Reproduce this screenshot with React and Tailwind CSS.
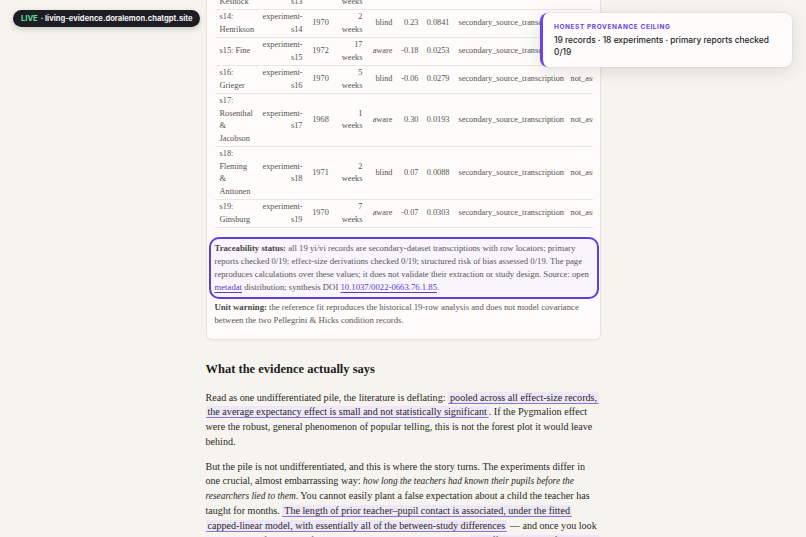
const rows = [
  { name: ["s13:", "Keshock"], id: "s13", year: "1971", weeks: "2", arm: "aware", es: "-0.02", v: "0.0144" },
  { name: ["s14:", "Henrikson"], id: "s14", year: "1970", weeks: "2", arm: "blind", es: "0.23", v: "0.0841" },
  { name: ["s15: Fine"], id: "s15", year: "1972", weeks: "17", arm: "aware", es: "-0.18", v: "0.0253" },
  { name: ["s16:", "Grieger"], id: "s16", year: "1970", weeks: "5", arm: "blind", es: "-0.06", v: "0.0279" },
  { name: ["s17:", "Rosenthal", "&", "Jacobson"], id: "s17", year: "1968", weeks: "1", arm: "aware", es: "0.30", v: "0.0193" },
  { name: ["s18:", "Fleming", "&", "Anttonen"], id: "s18", year: "1971", weeks: "2", arm: "blind", es: "0.07", v: "0.0088" },
  { name: ["s19:", "Ginsburg"], id: "s19", year: "1970", weeks: "7", arm: "aware", es: "-0.07", v: "0.0303" },
];

function Lines({ items }) {
  return items.map((t, i) => (
    <span key={i} className="block whitespace-nowrap">
      {t}
    </span>
  ));
}

function Mark({ children }) {
  return (
    <span className="box-decoration-clone rounded-[1px] border-b-[1.5px] border-[#8f75d2] bg-[#ede7f8] px-[2px]">
      {children}
    </span>
  );
}

function StudyTable() {
  const td = "py-[1px] align-middle";
  return (
    <div className="overflow-hidden">
      <table className="w-[406px] table-fixed border-collapse font-['Liberation_Serif',serif] text-[8.3px] leading-[12.5px] text-[#575350]">
        <colgroup>
          <col className="w-[48px]" />
          <col className="w-[45px]" />
          <col className="w-[26px]" />
          <col className="w-[34px]" />
          <col className="w-[30px]" />
          <col className="w-[26px]" />
          <col className="w-[31px]" />
          <col className="w-[113px]" />
          <col className="w-[53px]" />
        </colgroup>
        <tbody>
          {rows.map((r) => (
            <tr key={r.id} className="border-b border-[#ebe7e0]">
              <td className={`${td} pl-[5px] text-left`}>
                <Lines items={r.name} />
              </td>
              <td className={`${td} pr-[5px] text-right`}>
                <Lines items={["experiment-", r.id]} />
              </td>
              <td className={`${td} text-center`}>{r.year}</td>
              <td className={`${td} pr-[5px] text-right`}>
                <Lines items={[r.weeks, "weeks"]} />
              </td>
              <td className={`${td} pr-[5px] text-right`}>{r.arm}</td>
              <td className={`${td} pr-[5px] text-right`}>{r.es}</td>
              <td className={`${td} pr-[5px] text-right`}>{r.v}</td>
              <td className={`${td} whitespace-nowrap pl-[4px] text-left`}>secondary_source_transcription</td>
              <td className={`${td} whitespace-nowrap pl-[3px] text-left`}>not_assessed</td>
            </tr>
          ))}
        </tbody>
      </table>
    </div>
  );
}

export default function App() {
  return (
    <div className="relative h-[537px] overflow-hidden bg-[#f6f4ef]">
      <main className="mx-auto w-[395px]">
        <section className="-mt-[27px] rounded-[6px] border border-[#e8e4dc] bg-[#fdfcfa] pt-[8px] pr-[7px] pb-[12px] pl-[8px] shadow-[0_1px_2px_rgba(60,50,30,0.04)]">
          <StudyTable />

          <p className="-mx-[6px] mt-[9px] rounded-[10px] border-[2.5px] border-[#5b3fd9] bg-[#f8f5fd] px-[4px] py-[3px] font-['Liberation_Serif',serif] text-[8.7px] leading-[13px] text-[#5a5652]">
            <strong className="font-bold text-[#4a4643]">Traceability status:</strong> all 19 yi/vi records are
            secondary-dataset transcriptions with row locators; primary reports checked 0/19; effect-size derivations
            checked 0/19; structured risk of bias assessed 0/19. The page reproduces calculations over these values; it
            does not validate their extraction or study design. Source: open{" "}
            <a href="#" className="text-[#5b3fc9] underline underline-offset-[1.5px]">
              metadat
            </a>{" "}
            distribution; synthesis DOI{" "}
            <a href="#" className="text-[#5b3fc9] underline underline-offset-[1.5px]">
              10.1037/0022-0663.76.1.85
            </a>
            .
          </p>

          <p className="mt-[1.5px] font-['Liberation_Serif',serif] text-[8.7px] leading-[13px] text-[#5a5652]">
            <strong className="font-bold text-[#4a4643]">Unit warning:</strong> the reference fit reproduces the
            historical 19-row analysis and does not model covariance between the two Pellegrini &amp; Hicks condition
            records.
          </p>
        </section>

        <h2 className="mt-[21px] font-['Liberation_Serif',serif] text-[12.5px] leading-[16px] font-bold text-[#1f1c19]">
          What the evidence actually says
        </h2>

        <p className="mt-[14px] font-['Liberation_Serif',serif] text-[10.1px] leading-[14.8px] whitespace-nowrap text-[#2c2825]">
          Read as one undifferentiated pile, the literature is deflating:{" "}
          <Mark>
            pooled across all effect-size records,
            <br />
            the average expectancy effect is small and not statistically significant
          </Mark>
          . If the Pygmalion effect
          <br />
          were the robust, general phenomenon of popular telling, this is not the forest plot it would leave
          <br />
          behind.
        </p>

        <p className="mt-[10px] font-['Liberation_Serif',serif] text-[10.1px] leading-[14.8px] whitespace-nowrap text-[#2c2825]">
          But the pile is not undifferentiated, and this is where the story turns. The experiments differ in
          <br />
          one crucial, almost embarrassing way:{" "}
          <em className="text-[9.4px]">
            how long the teachers had known their pupils before the
            <br />
            researchers lied to them
          </em>
          . You cannot easily plant a false expectation about a child the teacher has
          <br />
          taught for months.{" "}
          <Mark>
            The length of prior teacher–pupil contact is associated, under the fitted
            <br />
            capped-linear model, with essentially all of the between-study differences
          </Mark>{" "}
          — and once you look
          <br />
          at the weeks of contact before testing, the pattern is hard to miss:{" "}
          <Mark>the effect sits in the first weeks</Mark>.
        </p>
      </main>

      <div className="absolute top-[10px] left-[13px] flex h-[17px] w-[187px] items-center rounded-full bg-[#1f1d24] px-[8px] font-['Inter',sans-serif] text-[7.6px] font-bold whitespace-nowrap text-[#f2f2f2] shadow-[0_2px_6px_rgba(0,0,0,0.18)]">
        <span className="text-[#5fe0a0]">LIVE</span>
        <span className="ml-[3px]">· living-evidence.doralemon.chatgpt.site</span>
      </div>

      <aside className="absolute top-[13px] left-[540px] w-[252px] rounded-[8px] border-l-[3px] border-[#6a44e4] bg-[#fdfcfb] pt-[9px] pr-[12px] pb-[9px] pl-[11px] font-['Inter',sans-serif] shadow-[0_4px_18px_rgba(40,30,20,0.12),0_0_0_1px_rgba(0,0,0,0.04)]">
        <p className="text-[6.5px] leading-[10px] font-bold tracking-[0.09em] text-[#6a44e4] uppercase">
          Honest provenance ceiling
        </p>
        <p className="mt-[2px] text-[8.4px] leading-[12px] font-medium text-[#26231f]">
          19 records · 18 experiments · primary reports checked 0/19
        </p>
      </aside>
    </div>
  );
}
